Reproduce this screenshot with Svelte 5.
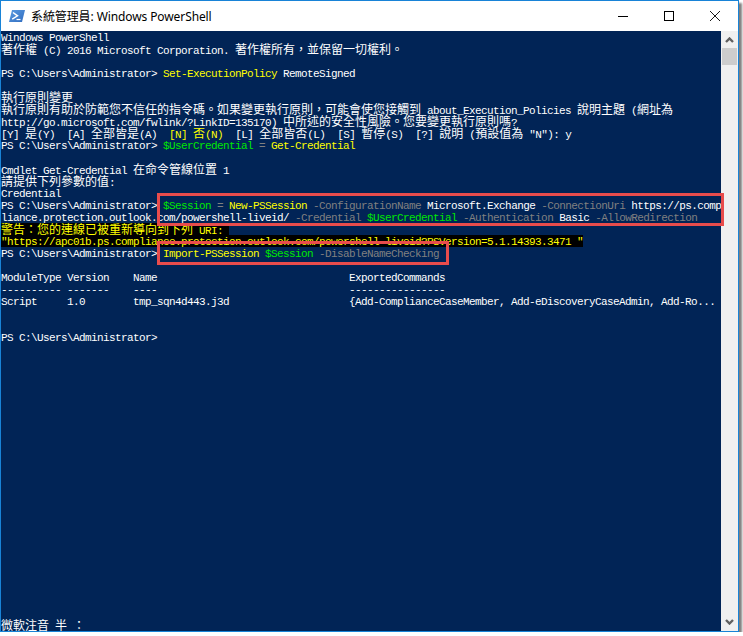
<script>
    const W = "w", Y = "y", G = "g", D = "d";

    // each line is a list of [text, colour] runs, a third item puts it on black
    const lines = [
        [["Windows PowerShell", W]],
        [["著作權 (C) 2016 Microsoft Corporation. 著作權所有，並保留一切權利。", W]],
        [],
        [["PS C:\\Users\\Administrator> ", W], ["Set-ExecutionPolicy", Y], [" RemoteSigned", W]],
        [],
        [["執行原則變更", W]],
        [["執行原則有助於防範您不信任的指令碼。如果變更執行原則，可能會使您接觸到 about_Execution_Policies 說明主題 (網址為", W]],
        [["http://go.microsoft.com/fwlink/?LinkID=135170) 中所述的安全性風險。您要變更執行原則嗎?", W]],
        [["[Y] 是(Y)  [A] 全部皆是(A)  ", W], ["[N] 否(N)", Y], ["  [L] 全部皆否(L)  [S] 暫停(S)  [?] 說明 (預設值為 \"N\"): y", W]],
        [["PS C:\\Users\\Administrator> ", W], ["$UserCredential", G], [" = ", D], ["Get-Credential", Y]],
        [],
        [["Cmdlet Get-Credential 在命令管線位置 1", W]],
        [["請提供下列參數的值:", W]],
        [["Credential", W]],
        [["PS C:\\Users\\Administrator> ", W], ["$Session", G], [" = ", D], ["New-PSSession", Y], [" -ConfigurationName", D], [" Microsoft.Exchange", W], [" -ConnectionUri", D], [" https://ps.comp", W]],
        [["liance.protection.outlook.com/powershell-liveid/", W], [" -Credential ", D], ["$UserCredential", G], [" -Authentication", D], [" Basic", W], [" -AllowRedirection", D]],
        [["警告：您的連線已被重新導向到下列 URI: ", Y, true]],
        [["\"https://apc01b.ps.compliance.protection.outlook.com/powershell-liveid?PSVersion=5.1.14393.3471 \"", Y, true]],
        [["PS C:\\Users\\Administrator> ", W], ["Import-PSSession", Y], [" $Session", G], [" -DisableNameChecking", D]],
        [],
        [["ModuleType Version    Name                                ExportedCommands", W]],
        [["---------- -------    ----                                ----------------", W]],
        [["Script     1.0        tmp_sqn4d443.j3d                    {Add-ComplianceCaseMember, Add-eDiscoveryCaseAdmin, Add-Ro...", W]],
        [],
        [],
        [["PS C:\\Users\\Administrator>", W]],
    ];

    // wide characters need their own size so they take two console cells
    const pieces = (text) => text.match(/[\u2e80-\uffef]+|[^\u2e80-\uffef]+/g).map((t) => ({
        t,
        wide: /[\u2e80-\uffef]/.test(t),
    }));
</script>

<div class="window">
    <header class="titlebar">
        <svg class="app-icon" width="16" height="12" viewBox="0 0 16 12">
            <defs>
                <linearGradient id="ps" x1="0" y1="0" x2="1" y2="1">
                    <stop offset="0" stop-color="#5b9be0" />
                    <stop offset="1" stop-color="#2f6cc0" />
                </linearGradient>
            </defs>
            <path d="M3 0 H16 L13 12 H0 Z" fill="url(#ps)" />
            <path d="M4 2.5 L8.5 5.8 L3.2 9.2" fill="none" stroke="#fff" stroke-width="1.5" />
            <path d="M7.5 9.5 H11.5" stroke="#fff" stroke-width="1.2" />
        </svg>
        <span class="title">系統管理員: Windows PowerShell</span>
        <div class="controls">
            <svg width="11" height="10" viewBox="0 0 11 10"><path d="M1 5.5 H11" stroke="#000" /></svg>
            <svg width="10" height="10" viewBox="0 0 10 10"><rect x="0.5" y="0.5" width="9" height="9" fill="none" stroke="#000" /></svg>
            <svg width="10" height="10" viewBox="0 0 10 10"><path d="M0 0 L10 10 M10 0 L0 10" stroke="#000" stroke-width="0.9" /></svg>
        </div>
    </header>

    <div class="content">
        <main class="console">
            {#each lines as line}
                <div class="line">
                    {#each line as [text, colour, black]}
                        <span class={colour} class:black>
                            {#each pieces(text) as p}
                                {#if p.wide}<span class="wide">{p.t}</span>{:else}{p.t}{/if}
                            {/each}
                        </span>
                    {/each}
                </div>
            {/each}
            <div class="line status"><span class="w"><span class="wide">微軟注音</span> <span class="wide">半</span> <span class="wide">：</span></span></div>

            <div class="mark mark-connect"></div>
            <div class="mark mark-import"></div>
        </main>

        <aside class="scrollbar">
            <svg width="9" height="6" viewBox="0 0 9 6"><path d="M1 5 L4.5 1.5 L8 5" fill="none" stroke="#606060" stroke-width="2.4" /></svg>
            <div class="thumb"></div>
            <svg class="down" width="9" height="6" viewBox="0 0 9 6"><path d="M1 1 L4.5 4.5 L8 1" fill="none" stroke="#606060" stroke-width="2.4" /></svg>
        </aside>
    </div>
</div>

<style>
    :global(body) {
        background: #fff;
    }

    .window {
        box-sizing: border-box;
        width: 739px;
        height: 632px;
        display: flex;
        flex-direction: column;
        background: #fff;
        border: 1px solid #1883d7;
        box-shadow: 3px 3px 2px 0 #808080;
    }

    .titlebar {
        flex: none;
        height: 30px;
        display: flex;
        align-items: center;
        padding-left: 8px;
        font-family: "Noto Sans", "Noto Sans CJK TC", sans-serif;
        font-size: 12px;
        letter-spacing: -0.1px;
        color: #000;
    }

    .app-icon {
        margin-right: 6px;
    }

    .controls {
        margin-left: auto;
        display: flex;
        gap: 35px;
        padding-right: 18px;
    }

    .controls svg + svg {
        margin-left: 1px;
    }

    .content {
        flex: 1;
        min-height: 0;
        display: flex;
    }

    .console {
        position: relative;
        width: 720px;
        display: flex;
        flex-direction: column;
        background: #012456;
        font-family: "Liberation Mono", "Noto Sans CJK TC", monospace;
        font-size: 11px;
        letter-spacing: -0.6px;
    }

    .line {
        height: 12px;
        flex: none;
        line-height: 14px;
        white-space: pre;
    }

    .status {
        margin-top: auto;
    }

    .wide {
        display: inline-block;
        height: 12px;
        line-height: 12px;
        font-family: "Noto Sans CJK TC", sans-serif;
        font-size: 12px;
        letter-spacing: 0;
    }

    .w { color: #fff; }
    .y { color: #ffff00; }
    .g { color: #00e800; }
    .d { color: #808080; }

    .black {
        display: inline-block;
        height: 12px;
        vertical-align: top;
        background: #000;
    }

    .mark {
        position: absolute;
        border: 3px solid #e84c4c;
        box-sizing: border-box;
    }

    .mark-connect {
        left: 156px;
        top: 162px;
        width: 567px;
        height: 33px;
    }

    .mark-import {
        left: 156px;
        top: 210px;
        width: 292px;
        height: 24px;
    }

    .scrollbar {
        flex: 1;
        display: flex;
        flex-direction: column;
        align-items: center;
        background: #f0f0f0;
        padding-top: 6px;
    }

    .thumb {
        width: 15px;
        height: 17px;
        margin-top: 5px;
        background: #cdcdcd;
    }

    .down {
        margin-top: auto;
        margin-bottom: 6px;
    }
</style>
